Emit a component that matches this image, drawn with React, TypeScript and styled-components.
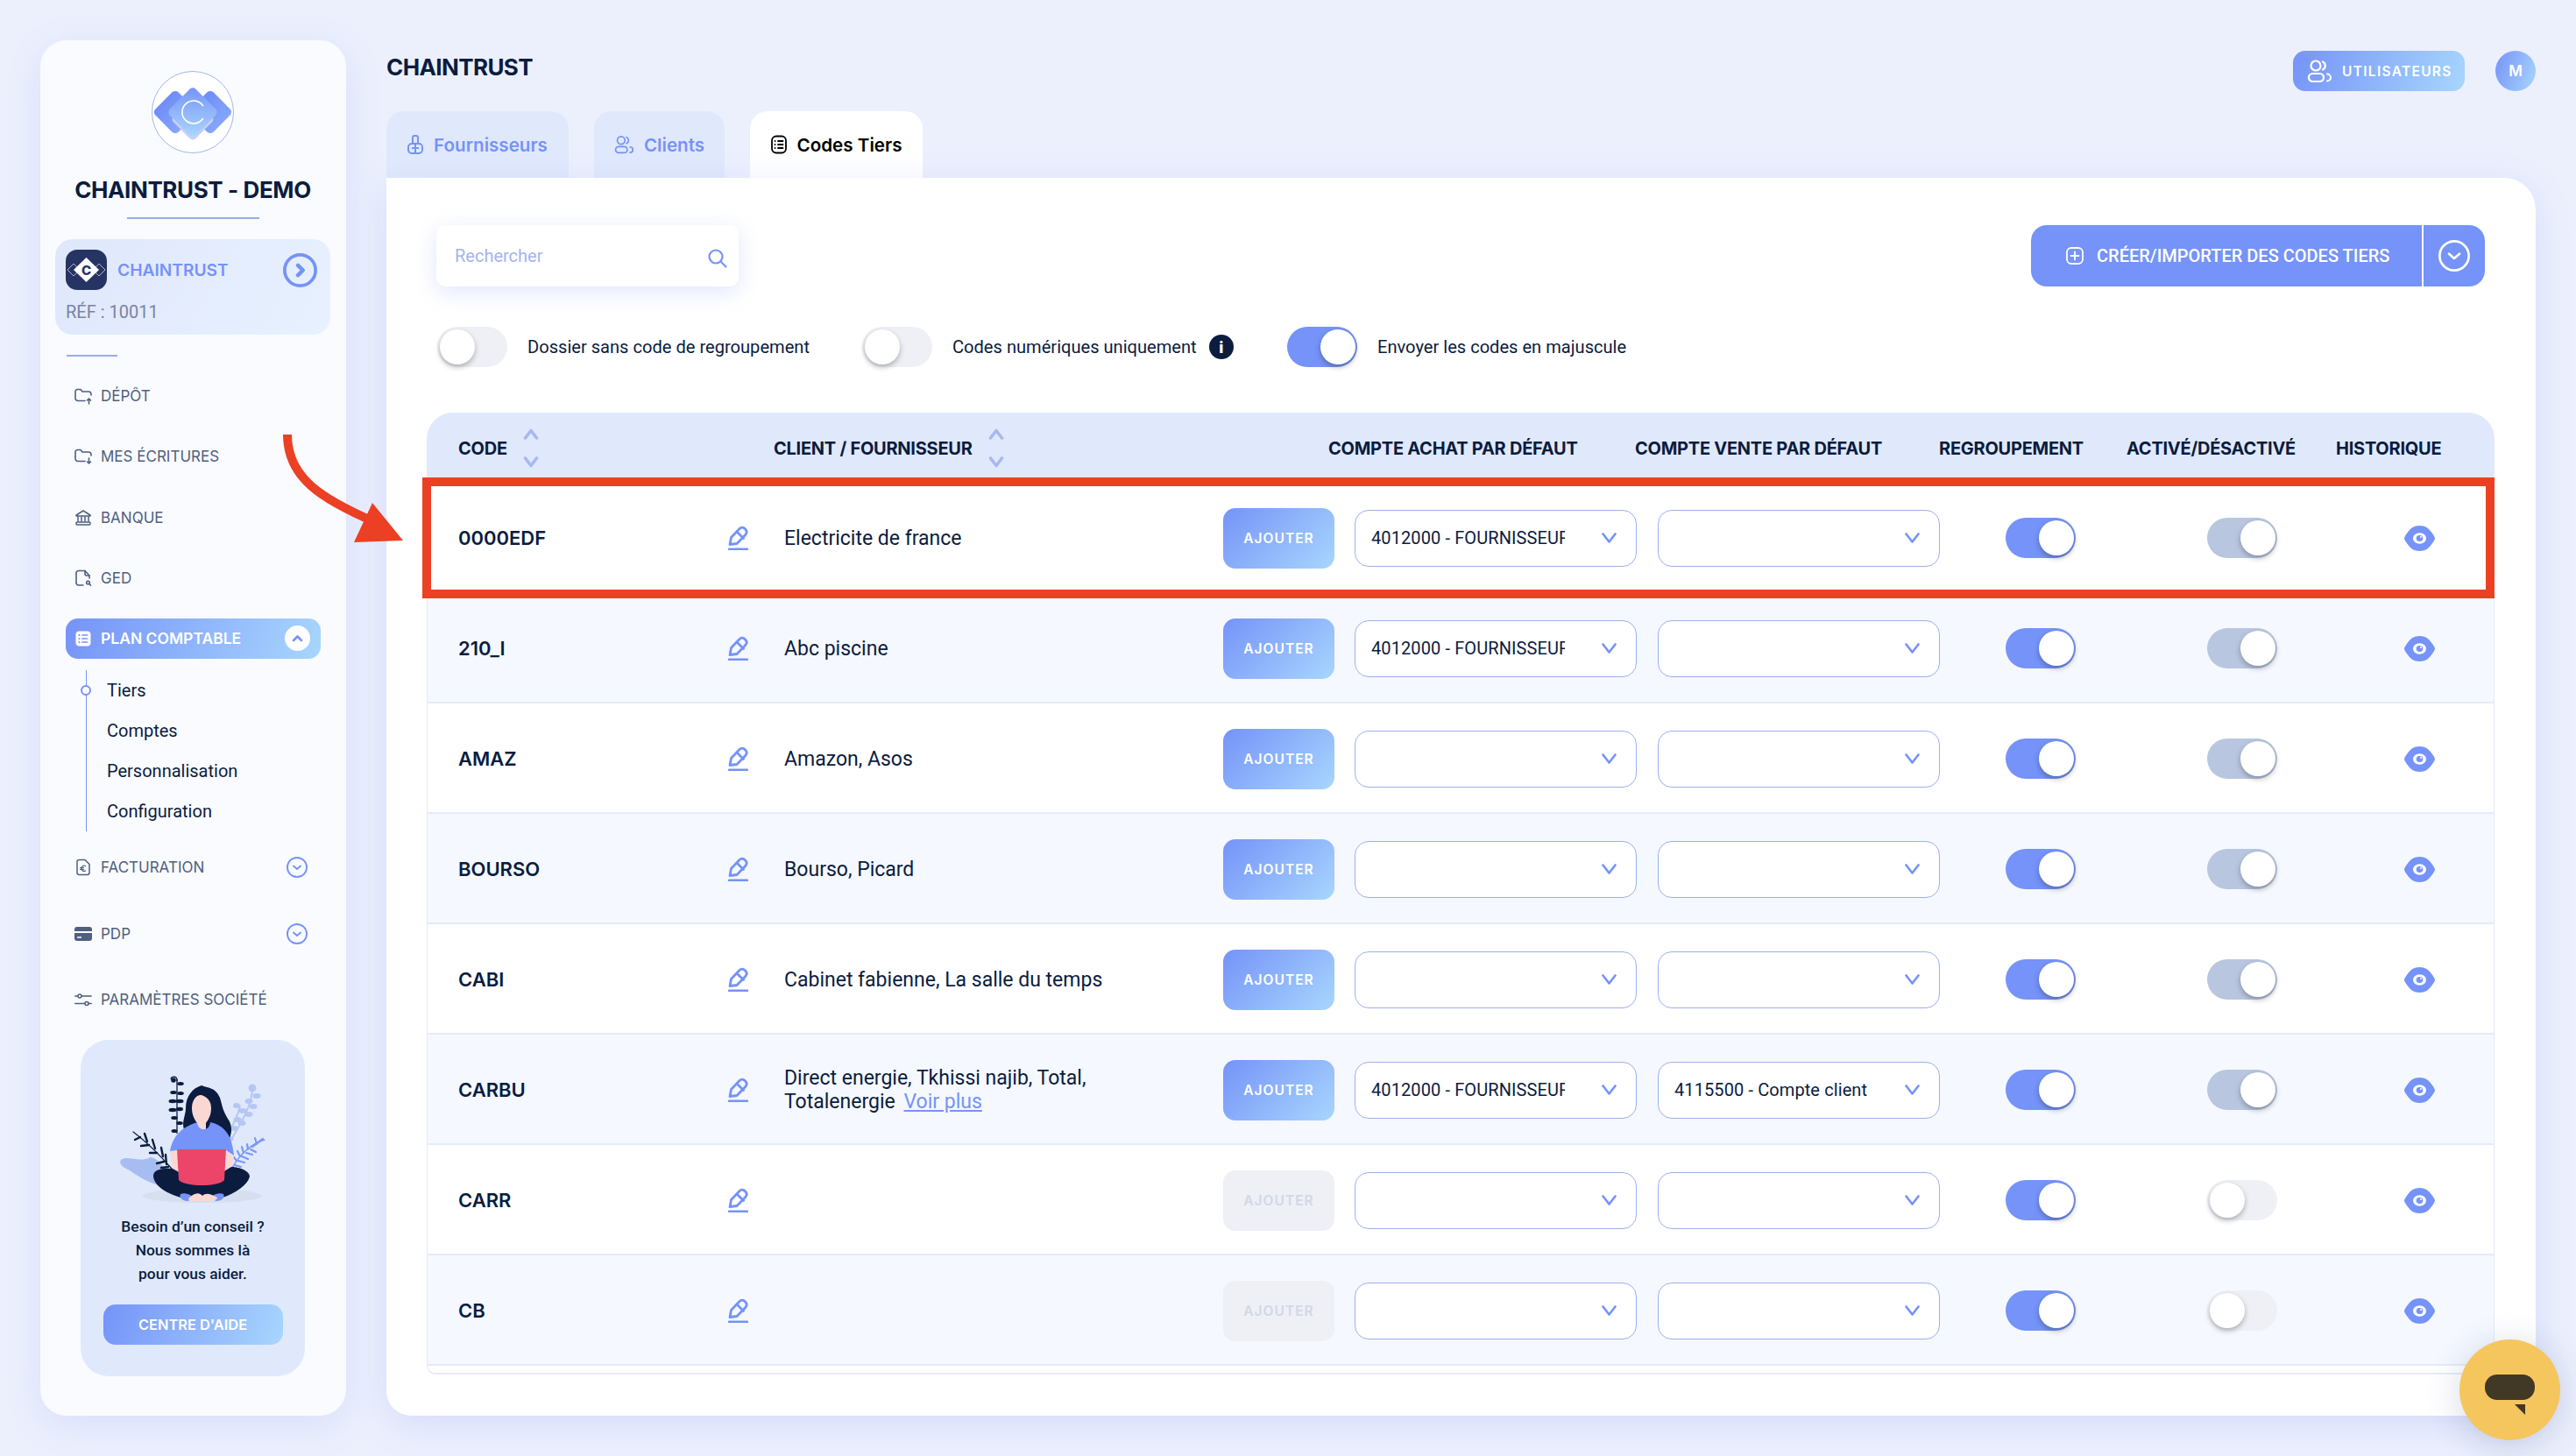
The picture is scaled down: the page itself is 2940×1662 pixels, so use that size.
import React, { ReactElement } from 'react';
import styled, { createGlobalStyle } from 'styled-components';

const HEAD = '"Inter", "Liberation Sans", sans-serif';
const BODY = 'Roboto, "Liberation Sans", sans-serif';
const BLUE = '#7593f8';
const NAVY = '#0b1c3e';
const GRADIENT = 'linear-gradient(110deg, #7593f8 0%, #a8d6fe 100%)';

const GlobalStyle = createGlobalStyle`
    html, body {
        margin: 0;
        padding: 0;
        background: #ecf0fd;
    }
    * {
        box-sizing: border-box;
    }
`;

type Row = {
    code: string;
    client?: string;
    more?: string;
    achat?: string;
    vente?: string;
    active: boolean;
    canAdd: boolean;
};

const FOURNISSEUR = '4012000 - FOURNISSEUR';

const rows: Row[] = [
    { code: '0000EDF', client: 'Electricite de france', achat: FOURNISSEUR, active: true, canAdd: true },
    { code: '210_I', client: 'Abc piscine', achat: FOURNISSEUR, active: true, canAdd: true },
    { code: 'AMAZ', client: 'Amazon, Asos', active: true, canAdd: true },
    { code: 'BOURSO', client: 'Bourso, Picard', active: true, canAdd: true },
    { code: 'CABI', client: 'Cabinet fabienne, La salle du temps', active: true, canAdd: true },
    {
        code: 'CARBU',
        client: 'Direct energie, Tkhissi najib, Total,',
        more: 'Totalenergie',
        achat: FOURNISSEUR,
        vente: '4115500 - Compte client',
        active: true,
        canAdd: true,
    },
    { code: 'CARR', active: false, canAdd: false },
    { code: 'CB', active: false, canAdd: false },
];

const FolderIcon = ({ down }: { down?: boolean }): ReactElement => (
    <svg width="20" height="20" viewBox="0 0 20 20" fill="none" stroke="#4f5f80" strokeWidth="1.6" strokeLinecap="round" strokeLinejoin="round">
        <path d="M12 15.5H4a3 3 0 0 1-3-3V5a2.5 2.5 0 0 1 2.5-2.5H7L9 5h7a3 3 0 0 1 3 3v1" />
        {down ? <path d="M16.5 12v6M14.5 16l2 2 2-2" /> : <path d="M16.5 19v-6M14.5 15l2-2 2 2" />}
    </svg>
);

const BankIcon = (): ReactElement => (
    <svg width="20" height="20" viewBox="0 0 20 20" fill="none" stroke="#4f5f80" strokeWidth="1.5" strokeLinejoin="round">
        <path d="M2 7l8-5 8 5v1H2z" />
        <path d="M4 8.5v6M8 8.5v6M12 8.5v6M16 8.5v6" />
        <rect x="2" y="15" width="16" height="3" rx="1" />
    </svg>
);

const GedIcon = (): ReactElement => (
    <svg width="20" height="20" viewBox="0 0 20 20" fill="none" stroke="#4f5f80" strokeWidth="1.6" strokeLinecap="round" strokeLinejoin="round">
        <path d="M10 18H5a3 3 0 0 1-3-3V4a2.5 2.5 0 0 1 2.5-2.5H12L17 7v3" />
        <path d="M12 1.5V5a2 2 0 0 0 2 2h3" />
        <circle cx="15.5" cy="15" r="1.8" />
        <path d="M17 16.5l1.5 1.7" />
    </svg>
);

const ListFilledIcon = (): ReactElement => (
    <svg width="20" height="20" viewBox="0 0 20 20">
        <rect x="1.5" y="1.5" width="17" height="17" rx="4" fill="#fff" />
        <g fill={BLUE}>
            <circle cx="5.5" cy="6" r="1.1" />
            <circle cx="5.5" cy="10" r="1.1" />
            <circle cx="5.5" cy="14" r="1.1" />
            <rect x="8" y="5.2" width="7.5" height="1.6" rx=".8" />
            <rect x="8" y="9.2" width="7.5" height="1.6" rx=".8" />
            <rect x="8" y="13.2" width="7.5" height="1.6" rx=".8" />
        </g>
    </svg>
);

const InvoiceIcon = (): ReactElement => (
    <svg width="20" height="20" viewBox="0 0 20 20" fill="none" stroke="#4f5f80" strokeWidth="1.5" strokeLinecap="round" strokeLinejoin="round">
        <path d="M5 1.5h7l5 5V16a2.5 2.5 0 0 1-2.5 2.5h-9.500A2.500 2.500 0 0 1 3 16V3.500a2 2 0 0 1 2-2z" />
        <path d="M12.500 8.500a3 3 0 0 0-4.500 2.500 3 3 0 0 0 4.500 3M6.500 10.500h4M6.500 12.300h4" strokeWidth="1.200" />
    </svg>
);

const CardIcon = (): ReactElement => (
    <svg width="20" height="16" viewBox="0 0 20 16">
        <path d="M3 0h14a3 3 0 0 1 3 3v2H0V3a3 3 0 0 1 3-3zM0 7h20v6a3 3 0 0 1-3 3H3a3 3 0 0 1-3-3zm3 4.200v1.600h5v-1.600z" fill="#4f5f80" fillRule="evenodd" />
    </svg>
);

const SlidersIcon = (): ReactElement => (
    <svg width="20" height="16" viewBox="0 0 20 16" fill="#fbfcff" stroke="#4f5f80" strokeWidth="1.5" strokeLinecap="round">
        <path d="M0.800 4h18.400M0.800 12.500h18.400" />
        <circle cx="6" cy="4" r="2" />
        <circle cx="14" cy="12.500" r="2" />
    </svg>
);

const RoundChevron = ({ size, stroke, color, right }: { size: number; stroke: number; color: string; right?: boolean }): ReactElement => (
    <svg width={size} height={size} viewBox="0 0 24 24" fill="none" stroke={color} strokeWidth={stroke} strokeLinecap="round" strokeLinejoin="round">
        <circle cx="12" cy="12" r={12 - stroke / 2} />
        {right ? <path d="M10.500 8.500l3.500 3.500-3.500 3.500" strokeWidth={stroke + 0.5} /> : <path d="M8 10.500l4 3.500 4-3.500" strokeWidth={stroke} />}
    </svg>
);

const UsersIcon = ({ color, size }: { color: string; size: number }): ReactElement => (
    <svg width={size} height={size} viewBox="0 0 28 28" fill="none" stroke={color} strokeWidth="2.200" strokeLinecap="round">
        <circle cx="10" cy="8" r="5.500" />
        <rect x="2" y="17" width="17" height="9" rx="4.500" />
        <path d="M18 3.500a5 5 0 0 1 0 9M23 17.500a4 4 0 0 1 0 8" />
    </svg>
);

const SupplierIcon = (): ReactElement => (
    <svg width="18" height="22" viewBox="0 0 18 22" fill="none" stroke={BLUE} strokeWidth="2" strokeLinejoin="round">
        <path d="M6 10V3a2 2 0 0 1 2-2h2a2 2 0 0 1 2 2v7" />
        <rect x="1" y="10" width="16" height="11" rx="4" />
        <path d="M9 10v11M5 15h8" />
    </svg>
);

const CodesIcon = (): ReactElement => (
    <svg width="18" height="22" viewBox="0 0 18 22" fill="none" stroke="#000" strokeWidth="1.800" strokeLinecap="round">
        <rect x="1" y="1.500" width="16" height="19" rx="5" />
        <path d="M8 7h5.500M8 11h5.500M8 15h5.500M4.500 7h.1M4.500 11h.1M4.500 15h.1" />
    </svg>
);

const SearchIcon = (): ReactElement => (
    <svg width="22" height="22" viewBox="0 0 22 22" fill="none" stroke={BLUE} strokeWidth="2.200" strokeLinecap="round">
        <circle cx="9" cy="9" r="7.500" />
        <path d="M14.500 14.500l6 6" />
    </svg>
);

const PlusSquareIcon = (): ReactElement => (
    <svg width="20" height="20" viewBox="0 0 20 20" fill="none" stroke="#fff" strokeWidth="1.800" strokeLinecap="round">
        <rect x="1" y="1" width="18" height="18" rx="5" />
        <path d="M10 5.500v9M5.500 10h9" />
    </svg>
);

const PencilIcon = (): ReactElement => (
    <svg width="23" height="28" viewBox="0 0 23 28" fill="none" stroke={BLUE} strokeWidth="2.800" strokeLinejoin="round" strokeLinecap="round">
        <path d="M2 21.500l1.500-8L13 3.500q2.500-2.500 5.500-.5l1.500 1.500q2.500 3-.3 6L10 20.500z" />
        <path d="M10 7l7.500 7.500" />
        <path d="M1.200 26.800h20.600" strokeWidth="2.800" />
    </svg>
);

const EyeIcon = (): ReactElement => (
    <svg width="35" height="29" viewBox="0 0 35 29">
        <path d="M17.500 0C24 0 28 3 31 7.500 33.500 11 35 13 35 14.500 35 16 33.500 18 31 21.500 28 26 24 29 17.500 29 11 29 7 26 4 21.500 1.500 18 0 16 0 14.500 0 13 1.500 11 4 7.500 7 3 11 0 17.500 0z" fill={BLUE} />
        <ellipse cx="17.500" cy="14.500" rx="7.500" ry="6.200" fill="#fff" />
        <ellipse cx="17.500" cy="14.500" rx="3.800" ry="3.400" fill={BLUE} />
        <circle cx="19" cy="13" r="1.100" fill="#fff" />
    </svg>
);

const SelectChevron = (): ReactElement => (
    <svg width="17" height="12" viewBox="0 0 17 12" fill="none" stroke={BLUE} strokeWidth="2.600" strokeLinecap="round" strokeLinejoin="round">
        <path d="M1.500 1.500l7 9 7-9" />
    </svg>
);

const BrandLogo = (): ReactElement => (
    <svg width="94" height="94" viewBox="0 0 94 94">
        <defs>
            <linearGradient id="sideDiamond" x1="0" y1="0" x2="1" y2="0">
                <stop offset="0" stopColor="#6f8df6" />
                <stop offset="1" stopColor="#86a6fa" />
            </linearGradient>
            <linearGradient id="mainDiamond" x1="0" y1="0" x2="1" y2="1">
                <stop offset="0" stopColor="#7593f8" />
                <stop offset="1" stopColor="#abd8fe" />
            </linearGradient>
        </defs>
        <circle cx="47" cy="47" r="46.500" fill="#fff" stroke="#a3b4ee" strokeWidth="1" />
        <rect x="8.500" y="28.500" width="37" height="37" rx="5" transform="rotate(45 27 47)" fill="url(#sideDiamond)" />
        <rect x="48.500" y="28.500" width="37" height="37" rx="5" transform="rotate(45 67 47)" fill="url(#sideDiamond)" />
        <rect x="29" y="37" width="36" height="36" rx="5" transform="rotate(45 47 55)" fill="#c6cffa" />
        <rect x="26" y="26" width="42" height="42" rx="5" transform="rotate(45 47 47)" fill="url(#mainDiamond)" />
        <path d="M58.500 39.500A13 13 0 1 0 58.500 54.500" fill="none" stroke="#fff" strokeWidth="1.600" strokeLinecap="round" />
    </svg>
);

const CompanyLogo = (): ReactElement => (
    <svg width="47" height="46" viewBox="0 0 47 46">
        <rect width="47" height="46" rx="13" fill="#263463" />
        <path d="M2 23l7-7 7 7-7 7zM31 23l7-7 7 7-7 7z" fill="none" stroke="#cdd3e6" strokeWidth=".8" />
        <path d="M23.500 9L38 23 23.500 37 9 23z" fill="#fff" />
        <text x="23.500" y="28.500" textAnchor="middle" fontFamily="Inter, sans-serif" fontWeight="800" fontSize="15" fill="#263463">
            C
        </text>
    </svg>
);

const HelpIllustration = (): ReactElement => (
    <svg width="256" height="180" viewBox="2 0 256 180">
        <ellipse cx="141" cy="155" rx="68" ry="8" fill="#d5dfef" />
        <path d="M48 114c8-6 20 4 34-3 12 2 18 18 30 34-24 2-44-12-54-19-7-3-13-7-10-12z" fill="#a7bcf0" />
        <g stroke="#b5c6f3" strokeWidth="2" fill="#b5c6f3">
            <path d="M198 32c0 20-14 42-26 62M184 52c-3 14-10 26-16 36" fill="none" />
            <circle cx="198" cy="32" r="3.500" />
            <ellipse cx="203" cy="41" rx="3.500" ry="2" />
            <ellipse cx="194" cy="47" rx="3.500" ry="2" />
            <ellipse cx="199" cy="53" rx="3.500" ry="2" />
            <ellipse cx="187" cy="58" rx="3.500" ry="2" />
            <ellipse cx="194" cy="62" rx="3.500" ry="2" />
            <ellipse cx="181" cy="68" rx="3.500" ry="2" />
            <ellipse cx="186" cy="72" rx="3.500" ry="2" />
            <ellipse cx="177" cy="78" rx="3.500" ry="2" />
            <ellipse cx="180" cy="52" rx="3" ry="2" />
            <ellipse cx="172" cy="90" rx="3.500" ry="2" />
        </g>
        <g stroke="#7c97f8" strokeWidth="1.800" strokeLinecap="round" fill="none">
            <path d="M212 91c-14 4-28 16-37 32" strokeWidth="1.500" />
            <path d="M198 99l12-9M203 96l-2-7M193 102l-1-6M188 106l-2-7M184 110l-3-6M180 115l-3-4M196 102l6 3M191 106l7 2M186 110l7 3M182 115l7 2M178 120l7 2" strokeWidth="2.200" />
        </g>
        <g fill={NAVY}>
            <path d="M112 22v62" stroke={NAVY} strokeWidth="1.300" fill="none" />
            <path d="M112 24c1-6-6-6-7-2" stroke={NAVY} strokeWidth="1.300" fill="none" />
            <circle cx="108" cy="23" r="2.800" />
            <ellipse cx="116" cy="27" rx="3.800" ry="2" />
            <ellipse cx="108" cy="37" rx="3.800" ry="2" />
            <ellipse cx="116" cy="38" rx="3.800" ry="2" />
            <ellipse cx="107" cy="47" rx="4.500" ry="2.200" />
            <ellipse cx="115" cy="47" rx="4.500" ry="2.200" />
            <ellipse cx="107" cy="57" rx="4.500" ry="2.200" />
            <ellipse cx="115" cy="56" rx="4" ry="2.200" />
            <ellipse cx="109" cy="66" rx="3.800" ry="2" />
            <ellipse cx="115" cy="72" rx="3.800" ry="2" />
            <ellipse cx="109" cy="81" rx="3.500" ry="2" />
        </g>
        <g stroke={NAVY} strokeLinecap="round" fill="none">
            <path d="M62 82c16 12 30 26 44 42" strokeWidth="1.200" />
            <path d="M70 88l-6 3M75 84l3 9M80 97l-9 1M84 91l3 10M89 106l-8 0M94 100l2 10M97 116l-8 2M99 108l1 11M102 122l-8 1" strokeWidth="2.400" />
        </g>
        <path d="M140 29c7 3 16 2 21 14 3 10 3 14 9 24 6 8 4 18 2 22l-24-10h-28c-3-8 2-16 2-24 0-14 8-23 18-26z" fill={NAVY} />
        <path d="M129 55c0-10 6-16 11-15 5 2 11 5 11 15 0 10-5 15-6 17v6c0 8-10 8-10 0v-6c-2-3-6-8-6-17z" fill="#f9d8d3" />
        <path d="M104 104c3-16 12-27 31-33 1 11 14 11 15 0 18 4 25 17 27 38l-9-6h-56z" fill={BLUE} />
        <path d="M104 104l8 0 3 24-8-4zM177 110l-9-6-2 24 8-4z" fill="#f9d8d3" />
        <path d="M85 132c0-8 14-9 22-8l33 18 34-20c10 0 21 5 21 11-3 12-22 22-40 27l-15-5-14 4c-20-3-41-14-41-27z" fill={NAVY} />
        <path d="M116 153c4-2 12 0 16 5l-8 3c-6 0-10-4-8-8zM165 153c-4-2-12 0-16 5l8 3c6 0 10-4 8-8z" fill={BLUE} />
        <path d="M125 158c6-6 12-8 16-3 4-4 10-2 17 2 0 4-8 4-13 4h-16c-2 0-4-1-4-3z" fill="#f9d8d3" />
        <path d="M112 102h56l-2 35c-7 8-44 8-52 0z" fill="#ec4569" />
    </svg>
);

const Page = styled.div`
    position: relative;
    display: flex;
    gap: 46px;
    width: 2940px;
    height: 1662px;
    padding: 46px;
    overflow: hidden;
    background: #ecf0fd;
    font-family: ${BODY};
    color: ${NAVY};
`;

const Sidebar = styled.aside`
    display: flex;
    flex-direction: column;
    flex: 0 0 349px;
    height: 1570px;
    padding: 35px 18px 0 17px;
    background: #f9fbff;
    border-radius: 30px;
    box-shadow: 0 10px 40px rgba(110, 130, 240, 0.16);
`;

const LogoWrap = styled.div`
    display: flex;
    justify-content: center;
    height: 94px;
`;

const BrandTitle = styled.h1`
    margin: 25px 0 0;
    font-family: ${HEAD};
    font-size: 26px;
    font-weight: 700;
    line-height: 34px;
    letter-spacing: -0.4px;
    text-align: center;
    white-space: nowrap;
`;

const BrandRule = styled.div`
    align-self: center;
    width: 151px;
    height: 2px;
    margin-top: 14px;
    background: #9aabeb;
`;

const CompanyCard = styled.div`
    height: 109px;
    margin-top: 23px;
    padding: 12px 15px 0 12px;
    background: linear-gradient(120deg, #dfe7fb, #e8f1ff);
    border-radius: 20px;
`;

const CompanyRow = styled.div`
    display: flex;
    align-items: center;
    gap: 12px;
`;

const CompanyName = styled.span`
    flex: 1;
    font-family: ${HEAD};
    font-size: 19.2px;
    font-weight: 600;
    color: ${BLUE};
`;

const CompanyRef = styled.div`
    margin-top: 12px;
    font-size: 20px;
    line-height: 26px;
    color: #7b849e;
`;

const ShortRule = styled.div`
    width: 58px;
    height: 1.5px;
    margin: 23px 0 22px 13px;
    background: #9aabeb;
`;

const Nav = styled.nav`
    display: flex;
    flex-direction: column;
    padding: 0 11px 0 12px;
`;

const NavItem = styled.div<{ $mt?: number }>`
    display: flex;
    align-items: center;
    height: 46px;
    margin-top: ${(p) => p.$mt ?? 0}px;
    padding: 0 15px 0 10px;
    font-family: ${HEAD};
    font-size: 17px;
    font-weight: 400;
    color: #4f5f80;
    white-space: nowrap;
`;

const ActiveNavItem = styled(NavItem)`
    margin-top: 23px;
    padding-right: 12px;
    font-size: 17.5px;
    font-weight: 600;
    color: #fff;
    background: ${GRADIENT};
    border-radius: 14px;
`;

const NavIcon = styled.span`
    display: flex;
    justify-content: center;
    flex: 0 0 20px;
    margin-right: 10px;
`;

const NavChevron = styled.span`
    display: flex;
    margin-left: auto;
`;

const ChevronBadge = styled.span`
    display: flex;
    align-items: center;
    justify-content: center;
    width: 29px;
    height: 29px;
    margin-left: auto;
    background: #fff;
    border-radius: 50%;
`;

const SubMenu = styled.div`
    position: relative;
    margin: 13px 0 0 23px;
    padding-left: 23px;
    border-left: 1.5px solid ${BLUE};
`;

const SubDot = styled.span`
    position: absolute;
    top: 17px;
    left: -7px;
    width: 12px;
    height: 12px;
    background: #f9fbff;
    border: 2px solid ${BLUE};
    border-radius: 50%;
`;

const SubItem = styled.div`
    height: 46px;
    font-size: 20px;
    line-height: 46px;
    color: ${NAVY};
`;

const HelpCard = styled.div`
    display: flex;
    flex-direction: column;
    align-items: center;
    width: 256px;
    height: 384px;
    margin: 23px 0 0 29px;
    padding-top: 23px;
    background: #e0e9fc;
    border-radius: 32px;
`;

const HelpText = styled.p`
    margin: -3px 0 0;
    font-size: 17.4px;
    font-weight: 500;
    line-height: 27px;
    text-align: center;
    color: ${NAVY};
`;

const HelpButton = styled.div`
    display: flex;
    align-items: center;
    justify-content: center;
    width: 205px;
    height: 46px;
    margin-top: 21px;
    font-family: ${HEAD};
    font-size: 16.4px;
    font-weight: 600;
    color: #fff;
    background: ${GRADIENT};
    border-radius: 14px;
`;

const Main = styled.main`
    display: flex;
    flex-direction: column;
    flex: 1;
    min-width: 0;
    height: 1570px;
    padding-top: 12px;
`;

const TopBar = styled.header`
    display: flex;
    align-items: center;
    justify-content: space-between;
    height: 46px;
`;

const PageTitle = styled.h2`
    margin: -10px 0 0;
    font-family: ${HEAD};
    font-size: 26px;
    font-weight: 700;
    letter-spacing: -0.6px;
    color: ${NAVY};
`;

const TopActions = styled.div`
    display: flex;
    align-items: center;
    gap: 35px;
`;

const UsersButton = styled.div`
    display: flex;
    align-items: center;
    gap: 12px;
    width: 196px;
    height: 46px;
    padding-left: 16px;
    font-family: ${HEAD};
    font-size: 15.5px;
    font-weight: 600;
    letter-spacing: 1.3px;
    color: #fff;
    background: ${GRADIENT};
    border-radius: 14px;
`;

const Avatar = styled.div`
    display: flex;
    align-items: center;
    justify-content: center;
    width: 46px;
    height: 46px;
    font-family: ${HEAD};
    font-size: 17px;
    font-weight: 600;
    color: #fff;
    background: ${GRADIENT};
    border-radius: 50%;
`;

const Tabs = styled.div`
    display: flex;
    gap: 29px;
    margin-top: 23px;
`;

const Tab = styled.div<{ $w: number; $active?: boolean }>`
    display: flex;
    align-items: center;
    justify-content: center;
    gap: 12px;
    width: ${(p) => p.$w}px;
    height: 76px;
    font-family: ${HEAD};
    font-size: 20.6px;
    font-weight: 600;
    color: ${(p) => (p.$active ? '#000' : BLUE)};
    background: ${(p) => (p.$active ? '#fff' : '#e0e9fc')};
    border-radius: 20px 20px 0 0;
`;

const Panel = styled.section`
    flex: 1;
    min-height: 0;
    padding: 54px 47px 0 46px;
    overflow: hidden;
    background: #fff;
    border-radius: 0 36px 28px 28px;
    box-shadow: 0 10px 40px rgba(110, 130, 240, 0.18);
`;

const Toolbar = styled.div`
    display: flex;
    align-items: center;
    justify-content: space-between;
    padding: 0 11px;
`;

const SearchBox = styled.div`
    display: flex;
    align-items: center;
    justify-content: space-between;
    width: 345px;
    height: 70px;
    padding: 0 13px 0 21px;
    background: #fff;
    border-radius: 10px;
    box-shadow: 0 6px 24px rgba(120, 140, 240, 0.22);
`;

const SearchPlaceholder = styled.span`
    font-size: 20px;
    color: #a5b4ee;
`;

const SearchGlyph = styled.span`
    display: flex;
    padding-top: 6px;
`;

const CreateGroup = styled.div`
    display: flex;
    height: 70px;
    color: #fff;
    background: ${BLUE};
    border-radius: 18px;
`;

const CreateMain = styled.div`
    display: flex;
    align-items: center;
    gap: 15px;
    width: 448px;
    padding-left: 40px;
    font-size: 20px;
    font-weight: 500;
    border-right: 2px solid #fff;
`;

const CreateToggle = styled.div`
    display: flex;
    align-items: center;
    justify-content: center;
    width: 70px;
`;

const Filters = styled.div`
    display: flex;
    align-items: center;
    height: 46px;
    margin-top: 46px;
    padding-left: 12px;
`;

const Filter = styled.div<{ $w?: number }>`
    display: flex;
    align-items: center;
    gap: 23px;
    width: ${(p) => (p.$w ? `${p.$w}px` : 'auto')};
`;

const FilterLabel = styled.span`
    font-size: 20.1px;
    color: ${NAVY};
    white-space: nowrap;
`;

const InfoDot = styled.span`
    display: flex;
    align-items: center;
    justify-content: center;
    width: 28px;
    height: 28px;
    margin-left: -9px;
    font-family: ${HEAD};
    font-size: 18px;
    font-weight: 800;
    color: #fff;
    background: ${NAVY};
    border-radius: 50%;
`;

const Toggle = styled.span<{ $on?: boolean; $muted?: boolean }>`
    display: flex;
    flex: 0 0 80px;
    align-items: center;
    justify-content: ${(p) => (p.$on ? 'flex-end' : 'flex-start')};
    width: 80px;
    height: 46px;
    padding: 0 2px 0 3px;
    background: ${(p) => (!p.$on ? '#eef0f6' : p.$muted ? '#b8c6e0' : BLUE)};
    border-radius: 23px;

    &::after {
        content: '';
        width: 40px;
        height: 40px;
        background: #fff;
        border-radius: 50%;
        box-shadow: 0 3px 6px rgba(0, 0, 0, 0.28);
    }
`;

const Table = styled.div`
    position: relative;
    margin-top: 52px;
`;

const HeaderRow = styled.div`
    display: grid;
    grid-template-columns: 360px 633px 350px 347px 214px 239px 1fr;
    align-items: center;
    height: 80px;
    padding: 1px 0 0 36px;
    background: #e0e9fc;
    border-radius: 30px 30px 0 0;
`;

const HeaderCell = styled.div`
    display: flex;
    align-items: center;
    gap: 18px;
    font-family: ${HEAD};
    font-size: 20px;
    font-weight: 700;
    letter-spacing: -0.25px;
    color: ${NAVY};
    white-space: nowrap;
`;

const SortStack = styled.span`
    display: flex;
    flex-direction: column;
    gap: 19px;
`;

const BodyRow = styled.div<{ $tinted: boolean }>`
    display: grid;
    grid-template-columns: 308px 64px 501px 150px 346px 397px 230px 191px 102px;
    align-items: center;
    height: 126px;
    padding: 2px 0 0 35px;
    background: ${(p) => (p.$tinted ? '#f5f8ff' : '#fff')};
    border: solid #e5ebfa;
    border-width: 0 1px 2px;
`;

const CodeCell = styled.div`
    font-family: ${HEAD};
    font-size: 22px;
    font-weight: 600;
    color: ${NAVY};
`;

const ClientCell = styled.div`
    font-size: 23px;
    line-height: 27px;
    color: ${NAVY};
`;

const MoreLink = styled.a`
    margin-left: 4px;
    color: ${BLUE};
    text-decoration: underline;
`;

const AddButton = styled.div<{ $enabled: boolean }>`
    display: flex;
    align-items: center;
    justify-content: center;
    width: 127px;
    height: 69px;
    font-family: ${HEAD};
    font-size: 15.5px;
    font-weight: 600;
    letter-spacing: 1px;
    color: ${(p) => (p.$enabled ? '#fff' : '#d3d7e6')};
    background: ${(p) => (p.$enabled ? 'linear-gradient(135deg, #7593f8 0%, #a8d6fe 100%)' : '#eef0f6')};
    border-radius: 14px;
`;

const SelectBox = styled.div`
    display: flex;
    align-items: center;
    justify-content: space-between;
    width: 322px;
    height: 65px;
    padding: 0 22px 0 18px;
    background: #fff;
    border: 1.5px solid #9cb0ef;
    border-radius: 16px;
`;

const SelectValue = styled.span`
    width: 221px;
    overflow: hidden;
    font-size: 20px;
    letter-spacing: 0.1px;
    color: ${NAVY};
    white-space: nowrap;
`;

const EyeCell = styled.div`
    display: flex;
    justify-content: center;
    width: 102px;
`;

const TableEnd = styled.div`
    height: 10px;
    background: #fff;
    border: solid #e5ebfa;
    border-width: 0 1px 2px;
    border-radius: 0 0 30px 30px;
`;

const HighlightFrame = styled.div`
    position: absolute;
    top: 74px;
    left: -5px;
    right: 0;
    height: 138px;
    border: 10px solid #eb4024;
    pointer-events: none;
`;

const ArrowMark = styled.svg`
    position: absolute;
    top: 490px;
    left: 300px;
    overflow: visible;
`;

const ChatBubble = styled.div`
    position: absolute;
    top: 1529px;
    left: 2807px;
    display: flex;
    align-items: flex-start;
    justify-content: center;
    width: 115px;
    height: 115px;
    padding-top: 40px;
    background: #f5c65d;
    border-radius: 50%;
    box-shadow: 0 6px 40px rgba(40, 60, 120, 0.2);
`;

const SortArrows = (): ReactElement => (
    <SortStack>
        <svg width="18" height="13" viewBox="0 0 18 13" fill="none" stroke="#a8b8ef" strokeWidth="3.600" strokeLinecap="round" strokeLinejoin="round">
            <path d="M2.500 11L9 2.500l6.500 8.500" />
        </svg>
        <svg width="18" height="13" viewBox="0 0 18 13" fill="none" stroke="#a8b8ef" strokeWidth="3.600" strokeLinecap="round" strokeLinejoin="round">
            <path d="M2.500 2L9 10.500 15.500 2" />
        </svg>
    </SortStack>
);

export default function App(): ReactElement {
    return (
        <Page>
            <GlobalStyle />
            <Sidebar>
                <LogoWrap>
                    <BrandLogo />
                </LogoWrap>
                <BrandTitle>CHAINTRUST - DEMO</BrandTitle>
                <BrandRule />
                <CompanyCard>
                    <CompanyRow>
                        <CompanyLogo />
                        <CompanyName>CHAINTRUST</CompanyName>
                        <RoundChevron size={39} stroke={2.3} color={BLUE} right />
                    </CompanyRow>
                    <CompanyRef>RÉF : 10011</CompanyRef>
                </CompanyCard>
                <ShortRule />
                <Nav>
                    <NavItem>
                        <NavIcon>
                            <FolderIcon />
                        </NavIcon>
                        DÉPÔT
                    </NavItem>
                    <NavItem $mt={23}>
                        <NavIcon>
                            <FolderIcon down />
                        </NavIcon>
                        MES ÉCRITURES
                    </NavItem>
                    <NavItem $mt={24}>
                        <NavIcon>
                            <BankIcon />
                        </NavIcon>
                        BANQUE
                    </NavItem>
                    <NavItem $mt={23}>
                        <NavIcon>
                            <GedIcon />
                        </NavIcon>
                        GED
                    </NavItem>
                    <ActiveNavItem>
                        <NavIcon>
                            <ListFilledIcon />
                        </NavIcon>
                        PLAN COMPTABLE
                        <ChevronBadge>
                            <svg width="13" height="9" viewBox="0 0 13 9" fill="none" stroke={BLUE} strokeWidth="2.600" strokeLinecap="round" strokeLinejoin="round">
                                <path d="M2 7l4.500-4.500L11 7" />
                            </svg>
                        </ChevronBadge>
                    </ActiveNavItem>
                    <SubMenu>
                        <SubDot />
                        <SubItem>Tiers</SubItem>
                        <SubItem>Comptes</SubItem>
                        <SubItem>Personnalisation</SubItem>
                        <SubItem>Configuration</SubItem>
                    </SubMenu>
                    <NavItem $mt={18}>
                        <NavIcon>
                            <InvoiceIcon />
                        </NavIcon>
                        FACTURATION
                        <NavChevron>
                            <RoundChevron size={24} stroke={1.9} color={BLUE} />
                        </NavChevron>
                    </NavItem>
                    <NavItem $mt={30}>
                        <NavIcon>
                            <CardIcon />
                        </NavIcon>
                        PDP
                        <NavChevron>
                            <RoundChevron size={24} stroke={1.9} color={BLUE} />
                        </NavChevron>
                    </NavItem>
                    <NavItem $mt={29}>
                        <NavIcon>
                            <SlidersIcon />
                        </NavIcon>
                        PARAMÈTRES SOCIÉTÉ
                    </NavItem>
                </Nav>
                <HelpCard>
                    <HelpIllustration />
                    <HelpText>
                        Besoin d’un conseil ?
                        <br />
                        Nous sommes là
                        <br />
                        pour vous aider.
                    </HelpText>
                    <HelpButton>CENTRE D'AIDE</HelpButton>
                </HelpCard>
            </Sidebar>

            <Main>
                <TopBar>
                    <PageTitle>CHAINTRUST</PageTitle>
                    <TopActions>
                        <UsersButton>
                            <UsersIcon color="#fff" size={28} />
                            UTILISATEURS
                        </UsersButton>
                        <Avatar>M</Avatar>
                    </TopActions>
                </TopBar>

                <Tabs>
                    <Tab $w={208}>
                        <SupplierIcon />
                        Fournisseurs
                    </Tab>
                    <Tab $w={149}>
                        <UsersIcon color={BLUE} size={22} />
                        Clients
                    </Tab>
                    <Tab $w={197} $active>
                        <CodesIcon />
                        Codes Tiers
                    </Tab>
                </Tabs>

                <Panel>
                    <Toolbar>
                        <SearchBox>
                            <SearchPlaceholder>Rechercher</SearchPlaceholder>
                            <SearchGlyph>
                                <SearchIcon />
                            </SearchGlyph>
                        </SearchBox>
                        <CreateGroup>
                            <CreateMain>
                                <PlusSquareIcon />
                                CRÉER/IMPORTER DES CODES TIERS
                            </CreateMain>
                            <CreateToggle>
                                <RoundChevron size={36} stroke={1.8} color="#fff" />
                            </CreateToggle>
                        </CreateGroup>
                    </Toolbar>

                    <Filters>
                        <Filter $w={485}>
                            <Toggle />
                            <FilterLabel>Dossier sans code de regroupement</FilterLabel>
                        </Filter>
                        <Filter $w={485}>
                            <Toggle />
                            <FilterLabel>Codes numériques uniquement</FilterLabel>
                            <InfoDot>i</InfoDot>
                        </Filter>
                        <Filter>
                            <Toggle $on />
                            <FilterLabel>Envoyer les codes en majuscule</FilterLabel>
                        </Filter>
                    </Filters>

                    <Table>
                        <HeaderRow>
                            <HeaderCell>
                                CODE
                                <SortArrows />
                            </HeaderCell>
                            <HeaderCell>
                                CLIENT / FOURNISSEUR
                                <SortArrows />
                            </HeaderCell>
                            <HeaderCell>COMPTE ACHAT PAR DÉFAUT</HeaderCell>
                            <HeaderCell>COMPTE VENTE PAR DÉFAUT</HeaderCell>
                            <HeaderCell>REGROUPEMENT</HeaderCell>
                            <HeaderCell>ACTIVÉ/DÉSACTIVÉ</HeaderCell>
                            <HeaderCell>HISTORIQUE</HeaderCell>
                        </HeaderRow>
                        {rows.map((row, i) => (
                            <BodyRow key={row.code} $tinted={i % 2 === 1}>
                                <CodeCell>{row.code}</CodeCell>
                                <PencilIcon />
                                <ClientCell>
                                    {row.client}
                                    {row.more && (
                                        <>
                                            <br />
                                            {row.more} <MoreLink href="#">Voir plus</MoreLink>
                                        </>
                                    )}
                                </ClientCell>
                                <AddButton $enabled={row.canAdd}>AJOUTER</AddButton>
                                <SelectBox>
                                    <SelectValue>{row.achat}</SelectValue>
                                    <SelectChevron />
                                </SelectBox>
                                <SelectBox>
                                    <SelectValue>{row.vente}</SelectValue>
                                    <SelectChevron />
                                </SelectBox>
                                <Toggle $on />
                                <Toggle $on={row.active} $muted={row.active} />
                                <EyeCell>
                                    <EyeIcon />
                                </EyeCell>
                            </BodyRow>
                        ))}
                        <TableEnd />
                        <HighlightFrame />
                    </Table>
                </Panel>
            </Main>

            <ArrowMark width="150" height="140" viewBox="0 0 150 140">
                <path d="M28 6c0 50 40 74 100 100" fill="none" stroke="#eb4024" strokeWidth="10" />
                <path d="M125 84l35 43-56 2z" fill="#eb4024" />
            </ArrowMark>

            <ChatBubble>
                <svg width="57" height="46" viewBox="0 0 57 46">
                    <rect width="57" height="29" rx="14" fill="#413826" />
                    <path d="M34 34h12v12z" fill="#413826" />
                </svg>
            </ChatBubble>
        </Page>
    );
}
